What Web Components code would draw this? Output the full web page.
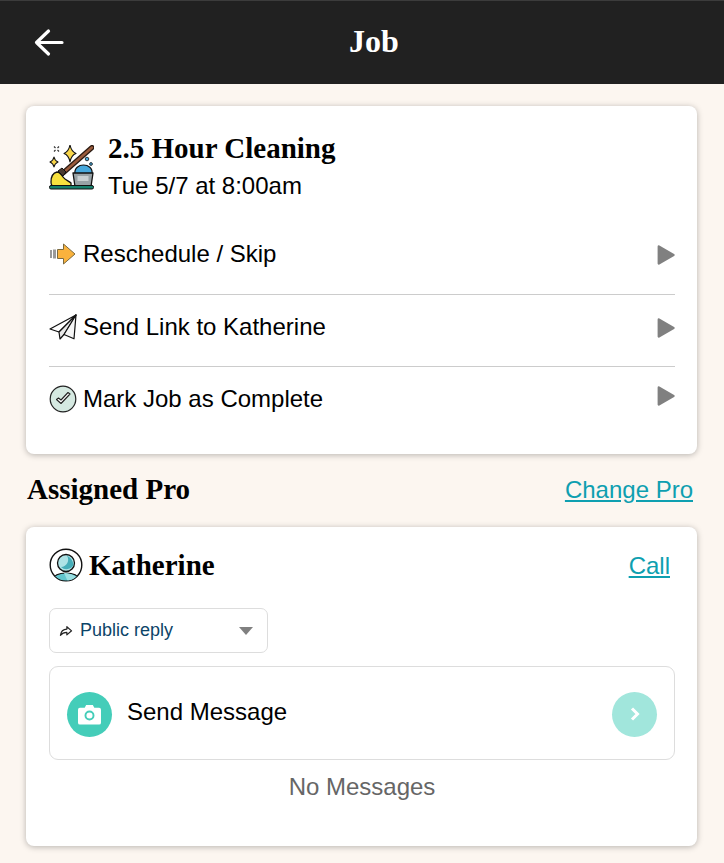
<!DOCTYPE html>
<html lang="en"><head><meta charset="utf-8"><title>Job</title>
<style>
html,body{margin:0;padding:0;background:#fcf6f0;}
body{font-family:"Liberation Sans",Arial,sans-serif;color:#000;width:724px;height:863px;overflow:hidden;}
</style></head><body>
<job-app></job-app>
<script>
const SERIF='"Liberation Serif","Times New Roman",serif';
function def(name,html){
  customElements.define(name,class extends HTMLElement{
    constructor(){super();const r=this.attachShadow({mode:'open'});r.innerHTML=html(this);}
  });
}
const ICONS={
 resched:`<svg width="27" height="22" viewBox="0 0 27 22"><rect x="1" y="7" width="2" height="8" fill="#999"/><rect x="4" y="6.500" width="3" height="9" fill="#999"/><path d="M8.500 6.500H14.500V1L26 11 14.500 21V15.500H8.500z" fill="#f9b23d" stroke="#7a6a40" stroke-width="1" stroke-linejoin="round"/></svg>`,
 plane:`<svg width="28" height="26" viewBox="0 0 28 26" fill="none" stroke="#111" stroke-width="1.200" stroke-linejoin="round"><path d="M27 1 1 15l9 3z" fill="#fff"/><path d="M27 1 10 18l1 7 4-4.500z" fill="#e8e8e8"/><path d="M27 1 15 20.500l10 4.300z" fill="#f6f6f6"/></svg>`,
 check:`<svg width="28" height="28" viewBox="0 0 28 28"><circle cx="14" cy="14" r="12.800" fill="#d5e9e1" stroke="#222" stroke-width="1.200"/><path d="M7.500 14.500l4.500 4 9-9.500-2-1.500-7 7.500-2.500-2z" fill="#fff" stroke="#222" stroke-width="1.100" stroke-linejoin="round"/></svg>`,
 clean:`<svg width="45" height="45" viewBox="0 0 45 45">
  <path d="M14 28 43 2.500" stroke="#2a1a12" stroke-width="5" stroke-linecap="round"/><path d="M14 28 43 2.500" stroke="#9a5b3c" stroke-width="2.400" stroke-linecap="round"/>
  <path d="M2 37c0-5 2-9 6-10 3 0 4 2 6 5 2 3 6 4 8 6v3H5c-2 0-3-1-3-4z" fill="#f7e13e" stroke="#111" stroke-width="1.300" stroke-linejoin="round"/>
  <path d="M9 26l4-3 4 4-3 4z" fill="#4a3a30" stroke="#111"/>
  <path d="M26 29c-1-6 4-9 8.500-9s9.500 3 8.500 9z" fill="#47a8dc" stroke="#111" stroke-width="1.200"/>
  <path d="M24 28h20l-2 13.500H26z" fill="#98a2a6" stroke="#111" stroke-width="1.300" stroke-linejoin="round"/><rect x="28.500" y="31" width="11" height="5" fill="#c9d0d2"/>
  <rect x=".5" y="40.500" width="44" height="3.500" rx="1.500" fill="#15806c" stroke="#111" stroke-width="1"/>
  <path d="M21 0c1 5 2.500 7 6 8.500-3.500 1-5 3.500-6 8.500-1-5-2.500-7.500-6-8.500 3.500-1.500 5-3.500 6-8.500z" fill="#f9d649" stroke="#111" stroke-width="1.100" stroke-linejoin="round"/>
  <path d="M5 12c.6 3 1.800 4 4 5-2.200 1-3.400 2-4 5-.6-3-1.800-4-4-5 2.200-1 3.400-2 4-5z" fill="#f9d649" stroke="#111" stroke-width="1.100" stroke-linejoin="round"/>
  <path d="M5 1.500 6.500 3M10 1.500 8.500 3M5 6.500 6.500 5M10 6.500 8.500 5" stroke="#333" stroke-width="1.200"/>
  <circle cx="38" cy="14" r="1.800" fill="#47a8dc" stroke="#111" stroke-width=".8"/><circle cx="42" cy="19" r="1.400" fill="#47a8dc" stroke="#111" stroke-width=".8"/>
 </svg>`,
 person:`<svg width="34" height="34" viewBox="0 0 34 34"><defs><clipPath id="c"><circle cx="17" cy="17" r="15.500"/></clipPath></defs><circle cx="17" cy="17" r="15.800" fill="#fff" stroke="#111" stroke-width="1.400"/><g clip-path="url(#c)"><path d="M3 32c2-5 8-7 14-7s12 2 14 7v4H3z" fill="#62c5cd" stroke="#111" stroke-width="1.200"/><path d="M15 25c3 0 12 1 14 7l-5 4h-4z" fill="#9adfe2"/></g><circle cx="17" cy="15" r="8.500" fill="#aee3e6" stroke="#111" stroke-width="1.300"/><path d="M12 19a8 8 0 0 0 12.500-2c-.5-5-4-8.500-6.500-9 3 4 0 11-6 11z" fill="#46aeb9"/></svg>`
};
def('app-bar',()=>`<style>
 :host{display:flex;align-items:center;justify-content:center;position:relative;height:83px;background:#212121;border-top:1px solid #3c3c3c;padding-left:24px;box-sizing:content-box;}
 .t{font:bold 32px ${SERIF};color:#fff;position:relative;top:-1px;}
 svg{position:absolute;left:34px;top:27px;}
</style><svg width="32" height="29" viewBox="0 0 32 29" fill="none" stroke="#fff" stroke-width="3.200" stroke-linecap="round" stroke-linejoin="round"><path d="M2.500 14.500H28M14.500 3 2.500 14.500 14.500 26"/></svg><span class="t"><slot></slot></span>`);
def('ui-card',()=>`<style>
 :host{display:block;background:#fff;border-radius:8px;box-shadow:0 1px 6px rgba(0,0,0,.28);box-sizing:border-box;}
</style><slot></slot>`);
def('job-title',()=>`<style>
 :host{display:flex;gap:11px;align-items:flex-start;}
 .i{width:48px;padding-top:14px;flex:none;line-height:0}
 .h{font:bold 29px/34px ${SERIF};}
 .s{font:24px/28px "Liberation Sans",Arial,sans-serif;margin-top:7px;}
</style><div class="i">${ICONS.clean}</div><div><div class="h">2.5 Hour Cleaning</div><div class="s">Tue 5/7 at 8:00am</div></div>`);
def('action-row',el=>`<style>
 :host{display:flex;align-items:center;height:${el.getAttribute('h')}px;padding-bottom:${el.getAttribute('pb')||0}px;font:24px/28px "Liberation Sans",Arial,sans-serif;}
 :host([line]){border-bottom:1px solid #ccc;}
 .i{width:34px;flex:none;display:flex;align-items:center;line-height:0;}
 .t{flex:1;}
 .a{flex:none;line-height:0;margin:${el.getAttribute('am')||'0'};}
</style><span class="i">${ICONS[el.getAttribute('icon')]}</span><span class="t"><slot></slot></span><svg class="a" width="18" height="20" viewBox="0 0 18 20"><path d="M1.800 1.500 16.500 10 1.800 18.500z" fill="#808080" stroke="#808080" stroke-width="2.400" stroke-linejoin="round"/></svg>`);
def('sec-head',()=>`<style>
 :host{display:flex;justify-content:space-between;align-items:center;height:73px;padding:0 4px 0 1px;}
 .h{font:bold 29px ${SERIF};position:relative;top:-1px;}
 a{font:24px "Liberation Sans",Arial,sans-serif;color:#0e9fb0;position:relative;top:-1px;}
</style><span class="h"><slot></slot></span><a href="#"><slot name="link"></slot></a>`);
def('pro-head',()=>`<style>
 :host{display:flex;align-items:center;justify-content:space-between;height:36px;padding-right:5px;}
 .l{display:flex;align-items:center;gap:6px;}
 .h{font:bold 29px ${SERIF};}
 a{font:24px "Liberation Sans",Arial,sans-serif;color:#0e9fb0;position:relative;top:1px;}
 svg{display:block}
</style><span class="l">${ICONS.person}<span class="h"><slot></slot></span></span><a href="#"><slot name="link"></slot></a>`);
def('reply-select',()=>`<style>
 :host{display:flex;align-items:center;width:219px;height:45px;box-sizing:border-box;border:1px solid #ddd;border-radius:7px;padding:0 14px 0 9px;background:#fff;color:#0c4468;font:18px "Liberation Sans",Arial,sans-serif;}
 .t{flex:1;margin-left:7px}
 svg{flex:none;display:block}
</style><svg width="14" height="12" viewBox="0 0 16 14" fill="none" stroke="#222" stroke-width="1.400" stroke-linejoin="round"><path d="M9 2l5.500 4.800L9 11.500V8.700C6 8.700 3.500 9.500 1.500 12 2 8 4.500 5 9 4.800z"/></svg><span class="t"><slot></slot></span><svg width="14" height="8" viewBox="0 0 14 8"><path d="M0 0h14l-7 8z" fill="#808080"/></svg>`);
def('message-box',()=>`<style>
 :host{display:flex;align-items:center;height:94px;box-sizing:border-box;border:1px solid #ddd;border-radius:9px;padding:2px 17px 0;background:#fff;font:24px "Liberation Sans",Arial,sans-serif;}
 .t{flex:1;margin-left:15px;position:relative;top:-2px}
 .c{width:45px;height:45px;border-radius:50%;flex:none;display:flex;align-items:center;justify-content:center;}
 .cam{background:#44cdb9}.go{background:#a1e6dc}
 svg{display:block}
</style><span class="c cam"><svg width="23" height="21" viewBox="0 0 24 21"><path d="M2 3.500h5L8.500 .5h7L17 3.500h5a2 2 0 0 1 2 2V19a2 2 0 0 1-2 2H2a2 2 0 0 1-2-2V5.500a2 2 0 0 1 2-2z" fill="#fff"/><circle cx="12" cy="11.500" r="4.200" fill="none" stroke="#44cdb9" stroke-width="2"/></svg></span><span class="t"><slot></slot></span><span class="c go"><svg width="10" height="14" viewBox="0 0 10 14" fill="none" stroke="#fff" stroke-width="3"><path d="M2 1.500 7.500 7 2 12.500"/></svg></span>`);
def('job-app',()=>`<style>
 :host{display:block;}
 main{padding:22px 27px 0 26px;}
 .c1{padding:25px 22px 0 23px;height:348px;}
 .c2{padding:20px 22px 0 23px;height:319px;}
 job-title{margin-bottom:23px;}
 reply-select{margin-top:25px;}
 message-box{margin-top:13px;}
 .none{text-align:center;font:24px "Liberation Sans",Arial,sans-serif;color:#666;margin-top:13px;}
</style>
<app-bar>Job</app-bar>
<main>
 <ui-card class="c1">
  <job-title></job-title>
  <action-row icon="resched" h="62" pb="9" am="2px 0 0" line>Reschedule / Skip</action-row>
  <action-row icon="plane" h="64" pb="7" am="2px 0 0" line>Send Link to Katherine</action-row>
  <action-row icon="check" h="64" am="0 0 6px">Mark Job as Complete</action-row>
 </ui-card>
 <sec-head>Assigned Pro<span slot="link">Change Pro</span></sec-head>
 <ui-card class="c2">
  <pro-head>Katherine<span slot="link">Call</span></pro-head>
  <reply-select>Public reply</reply-select>
  <message-box>Send Message</message-box>
  <div class="none">No Messages</div>
 </ui-card>
</main>`);
</script></body></html>
